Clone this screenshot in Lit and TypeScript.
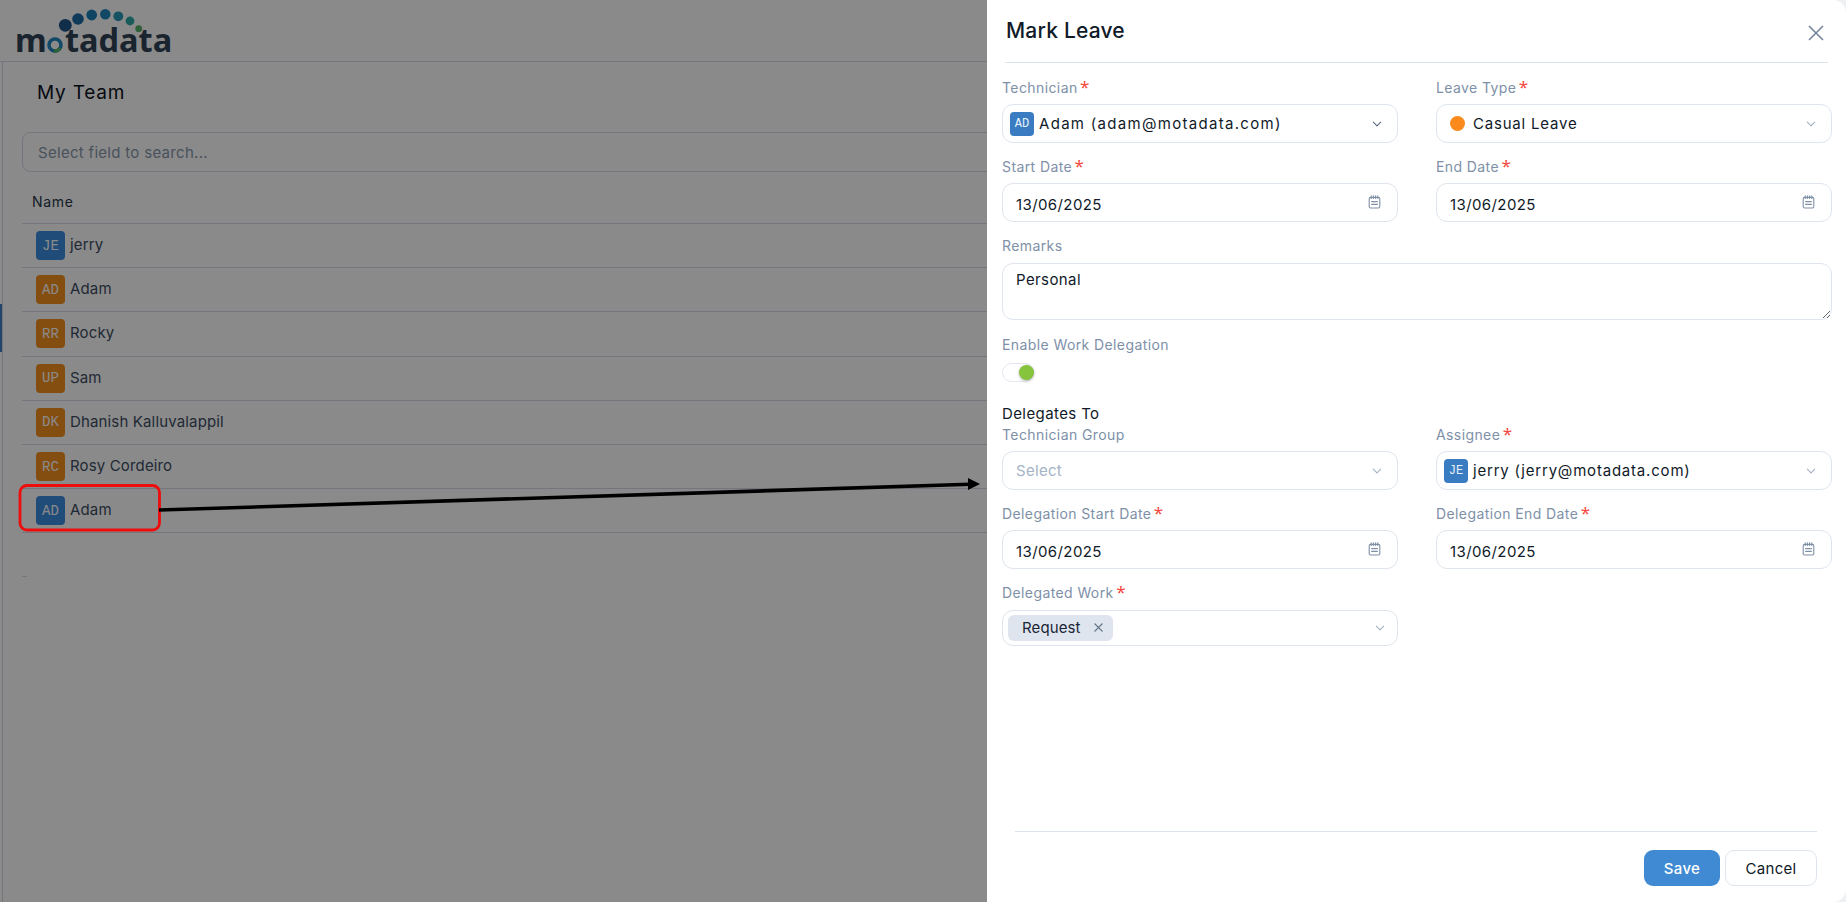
import { LitElement, html, css, svg } from "lit";
import { customElement } from "lit/decorators.js";

const chevron = (cls = "") => html`<svg class="chev ${cls}" width="10" height="10" viewBox="0 0 10 10" fill="none"><path d="M1.3 3.2 5 6.9l3.7-3.7" stroke="currentColor" stroke-width="1.1" stroke-linecap="round" stroke-linejoin="round"/></svg>`;
const calendar = html`<svg class="cal" width="13" height="14" viewBox="0 0 13 14" fill="none" stroke="#7f90a6" stroke-width="1.1"><rect x="1.2" y="2.4" width="10.6" height="10.6" rx="1.4"/><path d="M3.2.8v2.6M5.4.8v2.6M7.6.8v2.6M9.8.8v2.6M3.6 6.6h5.8M3.6 9.4h5.8" stroke-linecap="round"/></svg>`;

const rows = [
  { i: "JE", n: "jerry", c: "blue" },
  { i: "AD", n: "Adam", c: "orange" },
  { i: "RR", n: "Rocky", c: "orange" },
  { i: "UP", n: "Sam", c: "orange" },
  { i: "DK", n: "Dhanish Kalluvalappil", c: "orange" },
  { i: "RC", n: "Rosy Cordeiro", c: "orange" },
  { i: "AD", n: "Adam", c: "blue" },
];

const dots = [
  [65.3, 25.3, 6.4, "#1f5488"],
  [78, 19, 5.8, "#1f6ba6"],
  [91.7, 15, 5.4, "#1f7fb8"],
  [105.3, 14.3, 5.2, "#1f86bd"],
  [118.3, 16.3, 4.9, "#2a98b8"],
  [130, 21, 4.4, "#2fa6a8"],
  [138.7, 28.7, 3.4, "#58b368"],
];

@customElement("app-root")
export class AppRoot extends LitElement {
  static styles = css`
    :host { display: block; position: relative; width: 100%; height: 100vh; overflow: hidden; background: #fff;
      font-family: "Inter", "Noto Sans", sans-serif; font-size: 14px; color: #26364a; }
    * { box-sizing: border-box; }
    .page { height: 100%; display: flex; flex-direction: column; }
    .top { height: 62px; flex: none; border-bottom: 1px solid #d5dbe6; }
    .logo { display: block; }
    .logo text { font-family: "Noto Sans", sans-serif; font-weight: 700; font-size: 32.5px; fill: #2f4358; }
    .body { flex: 1; display: flex; }
    .rail { width: 3px; flex: none; border-right: 1px solid #d5dbe6; position: relative; }
    .mark { position: absolute; left: 0; top: 242px; width: 2px; height: 48px; background: #3b7fc4; }
    .main { flex: 1; padding: 0 0 0 19px; }
    .h1 { font-size: 19px; font-weight: 400; color: #0b1422; padding-left: 15px; height: 70px; line-height: 61px; letter-spacing: .8px; }
    .search { height: 40px; border: 1px solid #d5dbe6; border-radius: 8px; padding: 0 15px; line-height: 39px; color: #8797ac; font-size: 15px; letter-spacing: .3px; }
    .th { height: 52px; padding: 10px 0 0 10px; line-height: 40px; border-bottom: 1px solid #d5dbe6; font-weight: 400; color: #26364a; letter-spacing: .7px; }
    .tr { height: 44.2px; display: flex; align-items: center; gap: 5px; padding-left: 14px; border-bottom: 1px solid #d5dbe6; font-size: 15px; letter-spacing: .15px; color: #3d4d63; }
    .tr span { position: relative; top: -1px; }
    .av { width: 29px; height: 29px; border-radius: 4px; display: flex; align-items: center; justify-content: center; color: #fff; letter-spacing: 0;
      font-family: "Liberation Mono", monospace; font-size: 14px; }
    .av.blue { background: #3a8ce0; }
    .av.orange { background: #f59020; }
    .stub { width: 5px; height: 1px; background: #d5dbe6; margin-top: 43px; }
    .overlay { position: absolute; inset: 0; background: rgba(0,0,0,.46); }
    .anno { position: absolute; left: 0; top: 0; }
    .backing { position: absolute; top: 0; right: 0; bottom: 0; width: 20px; background: #eef0f3; }
    .drawer { position: absolute; top: 0; right: 0; bottom: 0; width: 859px; background: #fff; display: flex; flex-direction: column; border-radius: 0 13px 13px 0; }
    .dh { height: 62.5px; flex: none; margin: 0 18px 0 18px; border-bottom: 1px solid #dde3ec; display: flex; align-items: center; justify-content: space-between; padding: 0 0 1px 1px; }
    .dt { font-size: 21px; font-weight: 500; color: #101a28; position: relative; top: .5px; letter-spacing: .2px; }
    .x { margin-right: 4px; margin-top: 6px; display: block; }
    .form { padding: 15.5px 14px 0 15px; display: grid; grid-template-columns: 395.5px 395.5px; column-gap: 38.5px; row-gap: 14px; align-content: start; }
    .field { min-width: 0; }
    .field.date { padding-bottom: .8px; }
    .full { grid-column: 1 / -1; }
    .lb { height: 20px; line-height: 20px; margin-bottom: 6.3px; color: #7e90a8; letter-spacing: .4px; white-space: nowrap; }
    .st { color: #f4473c; font-family: "Noto Sans", sans-serif; font-size: 17px; line-height: 0; margin-left: 2.5px; position: relative; top: 0; letter-spacing: 0; }
    .box { height: 38.5px; border: 1px solid #dfe5ee; border-radius: 11px; display: flex; align-items: center; padding: 0 13px; color: #101a28; font-size: 15px; position: relative; white-space: nowrap; }
    .chev { position: absolute; right: 15px; top: 13.5px; color: #a4b1c2; }
    .chev.dark { color: #5c6b80; }
    .cal { position: absolute; right: 15.5px; top: 11px; }
    .date-v { position: relative; top: 2.4px; letter-spacing: .4px; }
    .box.user { padding-left: 7px; gap: 5px; }
    .em-a { letter-spacing: 1.3px; }
    .em-j { letter-spacing: .8px; }
    .cas { letter-spacing: .8px; }
    .sav { width: 24px; height: 24px; border-radius: 4px; background: #3a7cc2; color: #e8f0fa; display: flex; align-items: center; justify-content: center; font-family: "Liberation Mono", monospace; font-size: 12px; }
    .dot { width: 15px; height: 15px; border-radius: 50%; background: #fb8a1c; margin-right: 8px; }
    .box.leave { padding-left: 13px; }
    .ph { color: #a4b3c6; letter-spacing: .3px; }
    textarea { display: block; width: 100%; height: 56.5px; border: 1px solid #dfe5ee; border-radius: 11px; padding: 6px 13px; margin: 0; outline: none; font: inherit; font-size: 15px; color: #101a28; letter-spacing: .4px; resize: vertical; background: #fff; line-height: 20px; }
    .lb.rem { margin-bottom: 6.9px; }
    .en { margin-top: 1.2px; }
    .en .lb { margin-bottom: 8px; }
    .tog { width: 32px; height: 19px; border: 1px solid #e3e8f0; border-radius: 10px; position: relative; background: #fff; }
    .knob { position: absolute; right: -1px; top: 1px; width: 15px; height: 15px; border-radius: 50%; background: #85c43c; box-shadow: 0 1px 3px rgba(0,0,0,.3); }
    .sec { color: #101a28; font-size: 15px; letter-spacing: .4px; line-height: 20px; height: 20px; margin-top: 8px; margin-bottom: -13px; }
    .box.multi { height: 36px; padding-left: 5px; }
    .chip { height: 26px; width: 105px; background: #dfe5ee; border-radius: 6px; display: flex; align-items: center; justify-content: space-between; padding: 0 9px 0 14px; color: #1a2636; letter-spacing: .1px; }
    .multi .chev { right: 11.5px; top: 12px; }
    .foot { margin: auto 29px 0 28px; border-top: 1px solid #dde3ec; height: 71px; flex: none; display: flex; justify-content: flex-end; gap: 5px; padding-top: 18px; }
    .btn { height: 36px; border-radius: 9px; display: flex; align-items: center; justify-content: center; font-size: 15px; letter-spacing: .3px; }
    .save { width: 76px; background: #3f8ad3; color: #fff; font-weight: 500; }
    .cancel { width: 92px; border: 1px solid #dfe5ee; color: #101a28; }
  `;

  render() {
    return html`
      <div class="page">
        <div class="top">
          <svg class="logo" width="180" height="61" viewBox="0 0 180 61">
            ${dots.map(([x, y, r, c]) => svg`<circle cx=${x} cy=${y} r=${r} fill=${c}></circle>`)}
            <text x="15" y="52">m</text>
            <circle cx="55" cy="45" r="6" fill="none" stroke="#1f86bd" stroke-width="3.5"></circle>
            <path d="M54 51a6 6 0 0 0 6-3" fill="none" stroke="#58b368" stroke-width="3.5"></path>
            <text x="65" y="52">tadata</text>
          </svg>
        </div>
        <div class="body">
          <div class="rail"><div class="mark"></div></div>
          <div class="main">
            <div class="h1">My Team</div>
            <div class="search">Select field to search...</div>
            <div class="th">Name</div>
            ${rows.map((r) => html`<div class="tr"><div class="av ${r.c}">${r.i}</div><span>${r.n}</span></div>`)}
            <div class="stub"></div>
          </div>
        </div>
      </div>
      <div class="overlay"></div>
      <svg class="anno" width="1000" height="600" viewBox="0 0 1000 600" fill="none">
        <rect x="20" y="485.5" width="139.5" height="44.5" rx="7" stroke="#ee0c0c" stroke-width="2.8"></rect>
        <path d="M159 510 970 484.3" stroke="#000" stroke-width="3.6"></path>
        <path d="M980 484 968 478v12z" fill="#000"></path>
      </svg>
      <div class="backing"></div>
      <div class="drawer">
        <div class="dh">
          <div class="dt">Mark Leave</div>
          <svg class="x" width="16" height="16" viewBox="0 0 16 16" fill="none"><path d="M1 1l14 14M15 1 1 15" stroke="#6f8299" stroke-width="1.5"/></svg>
        </div>
        <div class="form">
          <div class="field">
            <div class="lb">Technician<span class="st">*</span></div>
            <div class="box user"><div class="sav">AD</div><span class="em-a">Adam (adam@motadata.com)</span>${chevron("dark")}</div>
          </div>
          <div class="field">
            <div class="lb">Leave Type<span class="st">*</span></div>
            <div class="box leave"><span class="dot"></span><span class="cas">Casual Leave</span>${chevron()}</div>
          </div>
          <div class="field date">
            <div class="lb">Start Date<span class="st">*</span></div>
            <div class="box"><span class="date-v">13/06/2025</span>${calendar}</div>
          </div>
          <div class="field date">
            <div class="lb">End Date<span class="st">*</span></div>
            <div class="box"><span class="date-v">13/06/2025</span>${calendar}</div>
          </div>
          <div class="field full">
            <div class="lb rem">Remarks</div>
            <textarea>Personal</textarea>
          </div>
          <div class="field full en">
            <div class="lb">Enable Work Delegation</div>
            <div class="tog"><div class="knob"></div></div>
          </div>
          <div class="sec full">Delegates To</div>
          <div class="field">
            <div class="lb">Technician Group</div>
            <div class="box"><span class="ph">Select</span>${chevron()}</div>
          </div>
          <div class="field">
            <div class="lb">Assignee<span class="st">*</span></div>
            <div class="box user"><div class="sav">JE</div><span class="em-j">jerry (jerry@motadata.com)</span>${chevron()}</div>
          </div>
          <div class="field date">
            <div class="lb">Delegation Start Date<span class="st">*</span></div>
            <div class="box"><span class="date-v">13/06/2025</span>${calendar}</div>
          </div>
          <div class="field date">
            <div class="lb">Delegation End Date<span class="st">*</span></div>
            <div class="box"><span class="date-v">13/06/2025</span>${calendar}</div>
          </div>
          <div class="field">
            <div class="lb">Delegated Work<span class="st">*</span></div>
            <div class="box multi">
              <div class="chip"><span>Request</span><svg width="11" height="11" viewBox="0 0 11 11" fill="none"><path d="M1.5 1.5l8 8M9.5 1.5l-8 8" stroke="#66778d" stroke-width="1.1"/></svg></div>
              ${chevron()}
            </div>
          </div>
        </div>
        <div class="foot">
          <div class="btn save">Save</div>
          <div class="btn cancel">Cancel</div>
        </div>
      </div>
    `;
  }
}
